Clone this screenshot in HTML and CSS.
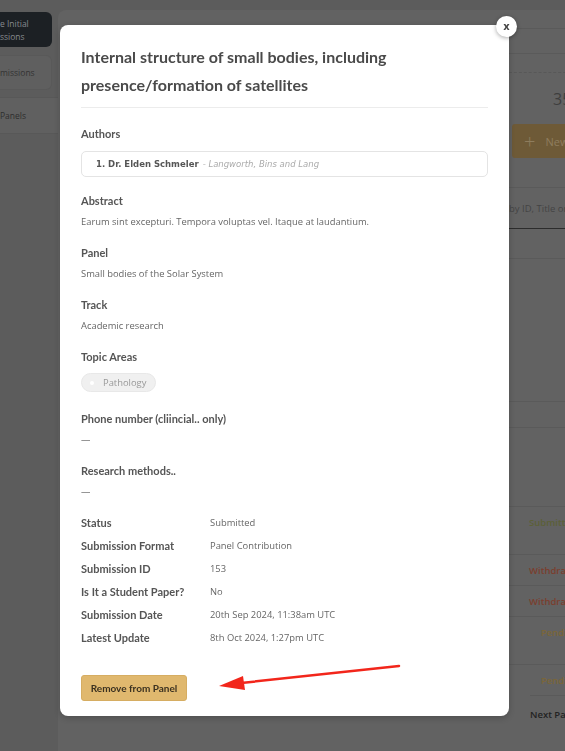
FILE: index.html
```html
<!DOCTYPE html>
<html lang="en">
<head>
  <meta charset="UTF-8">
  <meta name="viewport" content="width=device-width, initial-scale=1.0">
  <title>Submission details</title>
  <link rel="stylesheet" href="styles.css">
</head>
<body>
  <div class="page">
    <aside class="sidebar">
      <div class="side-item active">e Initial<br>ssions</div>
      <div class="side-item boxed">missions</div>
      <div class="side-row">Panels</div>
    </aside>

    <main class="main">
      <div class="pane">
        <div class="pane-line top"></div>
        <div class="pane-line dotted"></div>
        <div class="count">35</div>
        <div class="new-btn"><span class="plus">+</span> New</div>
        <div class="pane-line"></div>
        <div class="search">by ID, Title or</div>
        <div class="tabs"></div>
        <div class="spacer-a"></div>
        <div class="row short"></div>
        <div class="row tall"></div>
        <div class="row big"><span class="st submitted">Submitt</span></div>
        <div class="row"><span class="st withdrawn">Withdraw</span></div>
        <div class="row"><span class="st withdrawn">Withdraw</span></div>
        <div class="row big"><span class="st pending">Pendi</span></div>
        <div class="row"><span class="st pending">Pendi</span></div>
        <div class="next">Next Page</div>
      </div>
    </main>
  </div>

  <div class="overlay">
    <div class="modal">
      <button class="close">x</button>
      <h2 class="title">Internal structure of small bodies, including presence/formation of satellites</h2>

      <div class="section">
        <div class="label">Authors</div>
        <div class="authors">
          <span class="author-name">1. Dr. Elden Schmeler</span>
          <span class="author-org">- Langworth, Bins and Lang</span>
        </div>
      </div>

      <div class="section">
        <div class="label">Abstract</div>
        <div class="value">Earum sint excepturi. Tempora voluptas vel. Itaque at laudantium.</div>
      </div>

      <div class="section">
        <div class="label">Panel</div>
        <div class="value">Small bodies of the Solar System</div>
      </div>

      <div class="section">
        <div class="label">Track</div>
        <div class="value">Academic research</div>
      </div>

      <div class="section">
        <div class="label">Topic Areas</div>
        <div class="pills">
          <span class="pill"><span class="dot"></span>Pathology</span>
        </div>
      </div>

      <div class="section">
        <div class="label">Phone number (cliincial.. only)</div>
        <div class="value">—</div>
      </div>

      <div class="section">
        <div class="label">Research methods..</div>
        <div class="value">—</div>
      </div>

      <dl class="meta">
        <dt>Status</dt><dd>Submitted</dd>
        <dt>Submission Format</dt><dd>Panel Contribution</dd>
        <dt>Submission ID</dt><dd>153</dd>
        <dt>Is It a Student Paper?</dt><dd>No</dd>
        <dt>Submission Date</dt><dd>20th Sep 2024, 11:38am UTC</dd>
        <dt>Latest Update</dt><dd>8th Oct 2024, 1:27pm UTC</dd>
      </dl>

      <div class="actions">
        <button class="remove-btn">Remove from Panel</button>
      </div>

      <svg class="arrow" width="200" height="40" viewBox="0 0 200 40">
        <path d="M182 7 L24 24" stroke="#f2261b" stroke-width="2.5" fill="none" stroke-linecap="round"/>
        <path d="M2 27 L26 17 L28 31 Z" fill="#f2261b"/>
      </svg>
    </div>
  </div>
</body>
</html>
```

FILE: styles.css
```css
body {
  margin: 0;
  background: #5c5c5c;
  font-family: 'Open Sans', sans-serif;
  overflow: hidden;
}
.page {
  display: flex;
  height: 751px;
  padding-top: 10px;
  box-sizing: border-box;
}
.sidebar {
  width: 52px;
  flex-shrink: 0;
  padding-top: 2px;
}
.side-item {
  height: 35px;
  margin-bottom: 8px;
  border-radius: 0 6px 6px 0;
  font-size: 8.5px;
  display: flex;
  align-items: center;
  line-height: 13px;
  white-space: nowrap;
}
.side-item.active {
  background: #1c2024;
  color: #868a8e;
}
.side-item.boxed {
  background: #5f5f5f;
  border: 1px solid #595959;
  border-left: none;
  height: 33px;
  color: #333;
}
.side-row {
  width: 58px;
  height: 35px;
  background: #606060;
  border-top: 1px solid #585858;
  border-bottom: 1px solid #585858;
  display: flex;
  align-items: center;
  font-size: 8.5px;
  color: #2e2e2e;
  margin-top: -1px;
}
.main {
  flex: 1;
  background: #626262;
  border-radius: 8px 0 0 0;
  margin-left: 6px;
}
.pane {
  margin-left: 451px;
  display: flex;
  flex-direction: column;
}
.pane-line {
  height: 0;
  border-top: 1px solid #5a5a5a;
}
.pane-line.top {
  margin-top: 18px;
  height: 24px;
  border-bottom: 1px solid #5a5a5a;
}
.pane-line.dotted {
  margin-top: 18px;
  border-top: 1px dashed #585858;
}
.count {
  margin: 16px 0 0 44px;
  height: 20px;
  line-height: 20px;
  font-size: 16px;
  color: #3e3e3e;
}
.new-btn {
  margin: 15px 0 0 3px;
  height: 34px;
  background: #6e5a37;
  border-radius: 3px 0 0 3px;
  display: flex;
  align-items: center;
  padding-left: 12px;
  font-size: 11px;
  color: #8e7d5e;
  white-space: nowrap;
}
.plus {
  font-size: 20px;
  margin-right: 10px;
  font-weight: 300;
}
.new-btn + .pane-line {
  margin-top: 29px;
}
.search {
  margin-top: 14px;
  font-size: 9.5px;
  color: #444;
  white-space: nowrap;
}
.tabs {
  margin-top: 13px;
  border-top: 1.5px solid #2c2c2c;
  height: 29px;
  border-bottom: 1px solid #5a5a5a;
}
.spacer-a {
  height: 142px;
}
.row {
  height: 31px;
  flex-shrink: 0;
  box-sizing: border-box;
  padding-top: 9px;
  border-top: 1px solid #5a5a5a;
  line-height: 14px;
  white-space: nowrap;
  font-size: 9.5px;
  font-weight: 600;
}
.row.short {
  height: 26px;
}
.row.tall {
  height: 79px;
}
.row.big {
  height: 48px;
}
.st {
  margin-left: 20px;
}
.submitted { color: #5c6038; }
.withdrawn { color: #7b3e2e; }
.pending { color: #7b6638; margin-left: 32px; }
.next {
  border-top: 1px solid #5a5a5a;
  padding-top: 12px;
  font-size: 9.5px;
  font-weight: 600;
  color: #222;
  margin-left: 21px;
  white-space: nowrap;
}

/* modal */
.overlay {
  position: fixed;
  inset: 0;
  padding: 25px 0 0 60px;
}
.modal {
  position: relative;
  width: 449px;
  height: 691px;
  box-sizing: border-box;
  background: #fff;
  border-radius: 8px;
  padding: 18px 21px 0 21px;
  box-shadow: 0 2px 6px rgba(0, 0, 0, 0.2);
}
.close {
  position: absolute;
  top: -9px;
  right: -8px;
  width: 21px;
  height: 21px;
  border-radius: 50%;
  border: none;
  background: #fff;
  box-shadow: 0 1px 4px rgba(0, 0, 0, 0.35);
  font-family: 'DejaVu Sans', sans-serif;
  font-size: 10px;
  font-weight: bold;
  color: #444;
  padding: 0;
  line-height: 21px;
}
.title {
  margin: 0;
  font-family: Lato, sans-serif;
  font-weight: 700;
  font-size: 16px;
  line-height: 28px;
  color: #4a4a4a;
  padding-bottom: 8px;
  border-bottom: 1px solid #ececec;
  margin-bottom: 19px;
}
.section {
  margin-bottom: 17px;
}
.label {
  font-family: Lato, sans-serif;
  font-weight: 700;
  font-size: 11px;
  color: #555;
  line-height: 14px;
  margin-bottom: 7px;
}
.value {
  font-size: 9.4px;
  color: #666;
  line-height: 14px;
}
.authors {
  border: 1px solid #e4e4e4;
  border-radius: 5px;
  height: 24px;
  display: flex;
  align-items: center;
  padding-left: 14px;
  font-family: 'DejaVu Sans', sans-serif;
  font-size: 8.5px;
  margin-top: 10px;
  margin-bottom: 1px;
}
.author-name {
  font-weight: bold;
  color: #555;
}
.author-org {
  font-style: italic;
  color: #aaa;
  margin-left: 4px;
}
.pills {
  display: flex;
  margin: 9px 0 20px;
}
.pill {
  display: flex;
  align-items: center;
  height: 17px;
  padding: 0 9px 0 8px;
  border-radius: 10px;
  background: #f0f0f0;
  border: 1px solid #e8e8e8;
  font-size: 9.4px;
  color: #999;
}
.dot {
  width: 4px;
  height: 4px;
  border-radius: 50%;
  background: #fff;
  margin-right: 9px;
}
.meta {
  display: grid;
  grid-template-columns: 129px 1fr;
  row-gap: 9px;
  margin: 6px 0 0;
  line-height: 14px;
}
.meta dt {
  font-family: Lato, sans-serif;
  font-weight: 700;
  font-size: 11px;
  color: #555;
}
.meta dd {
  margin: 0;
  font-size: 9.4px;
  color: #666;
}
.actions {
  margin-top: 30px;
}
.remove-btn {
  width: 106px;
  height: 26px;
  background: #e0b86e;
  border: 1px solid #d6ad62;
  border-radius: 3px;
  font-family: Lato, sans-serif;
  font-weight: 700;
  font-size: 10px;
  color: #3b3120;
  padding: 0;
}
.arrow {
  position: absolute;
  left: 157px;
  top: 634px;
}
```
